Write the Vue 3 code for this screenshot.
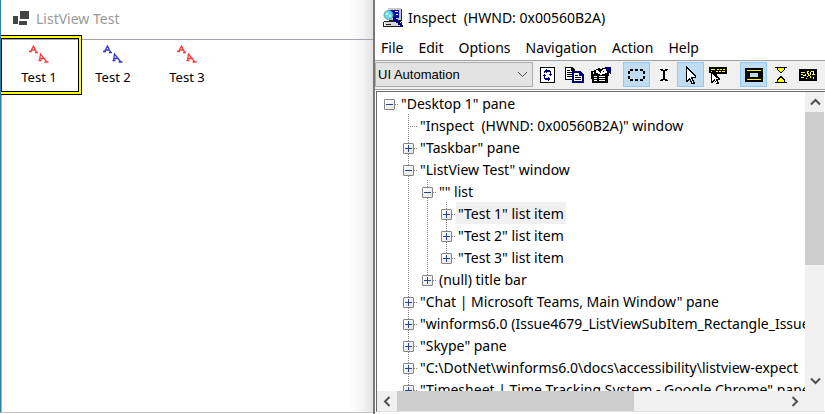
<script setup>
const list = [
  { label: 'Test 1', color: '#ff3b3b', selected: true },
  { label: 'Test 2', color: '#3a3acb', selected: false },
  { label: 'Test 3', color: '#ff3b3b', selected: false },
]
const menus = ['File', 'Edit', 'Options', 'Navigation', 'Action', 'Help']

// Each icon is a list of filled paths on a 20x18 pixel grid.
const groups = [
  [
    { name: 'Refresh', paths: [
      ['#000', 'M3 1h15v16H3z'], ['#fff', 'M4 2h13v14H4z'],
      ['#000080', 'M7 5h1V4h1V3h1v1h3v1h1v3h1v1h-1v1h-1V9h-1V8h1V6h-3v1H9V6H8v1H7zM7 8h1v1h1v1H8v2h3v-1h1v1h1v2h-1v1h-1v-1H8v-1H7v-3H6V9h1z'],
    ] },
    { name: 'Copy', paths: [
      ['#000', 'M1 1h7l3 3v10H1z'], ['#fff', 'M2 2h5v3h3v8H2z'],
      ['#000', 'M3 4h3v1H3zM3 6h5v1H3zM3 8h5v1H3zM3 10h5v1H3z'],
      ['#000080', 'M8 5h8l4 4v8H8z'], ['#fff', 'M10 7h5v3h3v5h-8z'],
      ['#000', 'M11 9h3v1h-3zM11 11h6v1h-6zM11 13h6v1h-6z'],
    ] },
    { name: 'Properties', paths: [
      ['#000', 'M0 5h3V4h2V3h2V2h2v1h2V2h3V1h5v6h-1v3h-1v7H1v-4H0z'], ['#000080', 'M15 1h5v7h-1V6h-1V5h-1V4h-2z'],
      ['#fff', 'M5 4h2v1h1v1h2V5h1V4h1V3h3v2h1v2h-2v1h-3v1H9V8H7V7H5zM2 6h1v2H2zM3 10h3v1H3zM8 10h6v1H8zM3 12h3v1H3zM8 12h6v1H8zM3 14h3v1H3zM8 14h6v1H8z'],
      ['#000', 'M9 6h1v1H9zM12 5h1v1h-1z'],
    ] },
  ],
  [
    { name: 'Show highlight rectangle', on: true, paths: [
      ['#000', 'M3 3h3v2H3zM8 3h3v2H8zM13 3h3v2h-3zM3 13h3v2H3zM8 13h3v2H8zM13 13h3v2h-3zM1 5h2v3H1zM1 10h2v3H1zM16 5h2v3h-2zM16 10h2v3h-2z'],
    ] },
    { name: 'Show caret rectangle', paths: [
      ['#000', 'M6 3h3v1h2V3h3v1h-1v1h-2v8h2v1h1v1h-3v-1H9v1H6v-1h1v-1h2V5H7V4H6z'],
    ] },
    { name: 'Watch cursor', on: true, paths: [
      ['#000', 'M5 0h1v1h1v1h1v1h1v1h1v1h1v1h1v1h1v1h1v1h1v3h-3v2h1v2h1v2h-1v1h-2v-1h-1v-2H9v-2H8v1H7v1H5z'],
      ['#fff', 'M6 3h1v1h1v1h1v1h1v1h1v1h1v1h1v1h1v1h-4v2h1v2h1v2h-1v-2h-1v-2H9v-1H8v1H7v1H6z'],
    ] },
    { name: 'Show tooltip', paths: [
      ['#000', 'M1 1h18v7H9v2h1v1h1v1h1v2h-2v2h1v2H8v-2H7v-1H6v1H5v1H3V7H1z'],
      ['#ff0', 'M3 3h4v1H3zM9 3h2v1H9zM12 3h2v1h-2zM15 3h2v1h-2zM3 5h1v1H3zM8 5h2v1H8zM11 5h2v1h-2zM14 5h3v1h-3z'],
      ['#fff', 'M4 8h1v1h1v1h1v1h1v1h2v1H8v2h1v2H8v-2H7v-2H6v1H5v1H4z'],
    ] },
  ],
  [
    { name: 'Show information', on: true, paths: [
      ['#000', 'M1 2h18v14H1z'], ['#ff0', 'M3 4h14v1H3zM3 13h14v1H3z'], ['#c0dcf3', 'M6 7h8v4H6z'],
    ] },
    { name: 'Collapse', paths: [
      ['#000', 'M4 1h12v1h-2v2h-1v1h-1v1h-1v1H9V6H8V5H7V4H6V2H4zM4 16h12v1H4zM9 10h2v1h1v1h1v1h1v3H6v-3h1v-1h1v-1h1z'],
      ['#ff0', 'M7 2h6v2h-1v1h-1v1H9V5H8V4H7zM9 12h2v1h1v1h1v2H7v-2h1v-1h1z'],
    ] },
    { name: 'Action overlay', paths: [
      ['#000', 'M1 3h18v12H1z'],
      ['#ff0', 'M3 6h4v1H3zM9 5h2v1H9zM13 5h3v1h-3zM3 8h2v1H3zM7 8h1v2H7zM10 7h1v3h-1zM14 8h3v1h-3zM3 11h3v1H3zM8 12h1v1H8zM12 10h1v2h-1zM15 11h1v2h-1z'],
      ['#fff', 'M9 6h1v2H9zM12 6h1v3h-1zM5 9h2v1H5zM9 10h1v1H9zM15 6h1v2h-1zM11 9h1v1h-1z'],
    ] },
  ],
]

// guides: ancestor levels whose vertical line passes through the row
const rows = [
  { level: 0, sign: '-', text: '"Desktop 1" pane', guides: [], root: true },
  { level: 1, sign: '', text: '"Inspect  (HWND: 0x00560B2A)" window', guides: [] },
  { level: 1, sign: '+', text: '"Taskbar" pane', guides: [] },
  { level: 1, sign: '-', text: '"ListView Test" window', guides: [] },
  { level: 2, sign: '-', text: '"" list', guides: [1] },
  { level: 3, sign: '+', text: '"Test 1" list item', guides: [1, 2], selected: true },
  { level: 3, sign: '+', text: '"Test 2" list item', guides: [1, 2] },
  { level: 3, sign: '+', text: '"Test 3" list item', guides: [1, 2], last: true },
  { level: 2, sign: '+', text: '(null) title bar', guides: [1], last: true },
  { level: 1, sign: '+', text: '"Chat | Microsoft Teams, Main Window" pane', guides: [] },
  { level: 1, sign: '+', text: '"winforms6.0 (Issue4679_ListViewSubItem_Rectangle_Issue', guides: [] },
  { level: 1, sign: '+', text: '"Skype" pane', guides: [] },
  { level: 1, sign: '+', text: '"C:\\DotNet\\winforms6.0\\docs\\accessibility\\listview-expect', guides: [] },
  { level: 1, sign: '+', text: '"Timesheet | Time Tracking System - Google Chrome" pane', guides: [] },
]

function columns(row) {
  return Array.from({ length: row.level }, (_, i) => row.guides.includes(i))
}
</script>

<template>
  <div class="screen">
    <section class="form">
      <header class="form-title">
        <svg width="16" height="14" viewBox="0 0 16 14"><path d="M7 0h9v8H7zM0 5h5v8H0zM6 10h8v4H6z" fill="#444" /></svg>
        <span>ListView Test</span>
      </header>
      <ul class="list">
        <li v-for="item in list" :key="item.label" :class="{ selected: item.selected }">
          <svg width="20" height="18" viewBox="0 0 20 18" fill="none" :stroke="item.color" stroke-width="1.3">
            <path d="M0 6.500h3M1.500 6.500L4.500 1l3 6M2.500 5h4M6 7.500h3M9.500 15.500h3M10.500 15.500L11.500 9l6 7.500M11 13.500h4M15.500 17h4" />
          </svg>
          <span>{{ item.label }}</span>
        </li>
      </ul>
    </section>

    <section class="inspect">
      <header class="inspect-title">
        <svg width="21" height="20" viewBox="0 0 21 20" shape-rendering="crispEdges">
          <path d="M5 0h13v12H5z" fill="#c8c8c8" />
          <path d="M18 1h1v12H6v-1h12z" fill="#222" />
          <path d="M7 2h9v8H7z" fill="#0010a8" />
          <path d="M12 3h3v1h-3zM13 6h2v1h-2z" fill="#fff" />
          <path d="M2 14h16v4H2z" fill="#d8d8d8" />
          <path d="M1 13h17v1H1zM0 14h1v5H0zM1 18h18v1H1zM18 14h1v4h-1zM3 16h5v1H3z" fill="#222" />
          <path d="M10 10h3v1h2v2h2v2h2v2h1v2h-3v-2h-2v-2h-2v-2h-2v-1h-1z" fill="#000090" />
          <circle cx="5.500" cy="7" r="4.500" fill="#5fe0ea" stroke="#6b9da5" shape-rendering="auto" />
          <path d="M3 5h2v2H3zM6 7h2v2H6z" fill="#d8ffff" />
        </svg>
        <span>Inspect&nbsp; (HWND: 0x00560B2A)</span>
      </header>
      <nav class="menu">
        <button v-for="m in menus" :key="m" type="button">{{ m }}</button>
      </nav>
      <div class="toolbar">
        <div class="combo">
          <select aria-label="Mode"><option>UI Automation</option></select>
          <svg width="11" height="7" viewBox="0 0 11 7"><path d="M1 1l4.500 4.500L10 1" fill="none" stroke="#555" /></svg>
        </div>
        <div v-for="(group, g) in groups" :key="g" class="group">
          <button v-for="icon in group" :key="icon.name" type="button" :aria-label="icon.name" :aria-pressed="!!icon.on" :class="{ on: icon.on }">
            <svg width="20" height="18" viewBox="0 0 20 18" shape-rendering="crispEdges">
              <path v-for="([fill, d], i) in icon.paths" :key="i" :fill="fill" :d="d" />
            </svg>
          </button>
        </div>
      </div>
      <div class="tree-frame">
        <ul class="tree">
          <li v-for="row in rows" :key="row.text" class="row">
            <i v-for="(on, i) in columns(row)" :key="i" class="guide" :class="{ on }"></i>
            <span class="node" :class="{ last: row.last, root: row.root }">
              <button v-if="row.sign" type="button" class="box" :aria-label="row.sign === '+' ? 'Expand' : 'Collapse'">
                <svg width="9" height="9" viewBox="0 0 9 9" shape-rendering="crispEdges">
                  <path :d="row.sign === '+' ? 'M1 4h7v1H1zM4 1h1v7H4z' : 'M1 4h7v1H1z'" fill="#2a4595" />
                </svg>
              </button>
            </span>
            <span class="label" :class="{ selected: row.selected }">{{ row.text }}</span>
          </li>
        </ul>
        <div class="bar vertical">
          <button type="button" aria-label="Scroll up"><svg width="11" height="8" viewBox="0 0 11 8"><path d="M1 6.500l4.500-4.500L10 6.500" /></svg></button>
          <div class="track"><div class="thumb"></div></div>
          <button type="button" aria-label="Scroll down"><svg width="11" height="8" viewBox="0 0 11 8"><path d="M1 1.500L5.500 6 10 1.500" /></svg></button>
        </div>
        <div class="bar horizontal">
          <button type="button" aria-label="Scroll left"><svg width="8" height="11" viewBox="0 0 8 11"><path d="M6.500 1L2 5.500 6.500 10" /></svg></button>
          <div class="track"><div class="thumb"></div></div>
          <button type="button" aria-label="Scroll right"><svg width="8" height="11" viewBox="0 0 8 11"><path d="M1.500 1L6 5.500 1.500 10" /></svg></button>
        </div>
        <div class="corner"></div>
      </div>
    </section>
  </div>
</template>

<style>
body { margin: 0; background: #fff; }
</style>
<style scoped>
.screen {
  display: grid;
  grid-template-columns: 373fr 452fr;
  height: 100vh;
  overflow: hidden;
  font: 14px/22px "Noto Sans", "Open Sans", sans-serif;
  color: #000;
}
ul { list-style: none; margin: 0; padding: 0; }
button { font: inherit; color: inherit; border: 0; margin: 0; padding: 0; background: none; }
svg { display: block; flex: none; }

.form {
  display: flex;
  flex-direction: column;
  min-width: 0;
  overflow: hidden;
  box-sizing: border-box;
  border-left: 1px solid #2f7fa8;
  border-bottom: 1px solid #c4c4c4;
  margin-bottom: 1px;
  background: linear-gradient(to left, #e2e2e2, #f4f4f4 10px, #fff 24px);
}
.form-title { display: flex; align-items: center; gap: 7px; height: 39px; padding: 0 12px; box-sizing: border-box; color: #999; }
.form-title span { margin-bottom: 2px; }
.form-title svg { margin-bottom: 4px; }
.list { display: flex; flex: 1; border-top: 1px solid #a0a4ae; border-left: 1px solid #b0b4bc; }
.list li {
  position: relative;
  display: flex;
  flex-direction: column;
  align-items: center;
  width: 74px;
  height: 52px;
  padding-top: 5px;
  font-size: 13px;
  line-height: 28px;
}
.list li.selected::after {
  content: "";
  position: absolute;
  inset: -4px -5px auto -3px;
  height: 54px;
  border: 2px solid #ff0;
  outline: 1px solid #000;
  box-shadow: inset 0 0 0 1px #000;
}

.inspect {
  display: flex;
  flex-direction: column;
  min-width: 0;
  min-height: 0;
  border-left: 2px solid #777;
  background: #fff;
}
.inspect-title { display: flex; align-items: center; gap: 4px; height: 36px; padding: 0 8px; }
.menu { display: flex; gap: 15px; height: 24px; padding: 0 6px; align-items: center; }
.toolbar { display: flex; gap: 9px; height: 27px; padding-top: 1px; border-top: 1px solid #a0a0a0; border-bottom: 1px solid #a0a0a0; background: #f0f0f0; align-items: flex-start; }
.combo { display: grid; align-items: center; width: 158px; margin-right: -9px; }
.combo > * { grid-area: 1 / 1; }
.combo svg { justify-self: end; margin-right: 5px; pointer-events: none; }
.combo select {
  appearance: none;
  width: 100%;
  height: 25px;
  padding: 0 2px;
  border: 1px solid #adadad;
  border-radius: 0;
  background: #e3e3e3;
  color: #000;
  font: 13px "Liberation Sans", sans-serif;
}
.group { display: flex; }
.group button { display: flex; align-items: center; justify-content: center; width: 27px; height: 25px; box-sizing: border-box; border: 1px solid transparent; }
.group button.on { background: #c0dcf3; border-color: #90c8f6; }

.tree-frame {
  flex: 1;
  display: grid;
  grid-template: minmax(0, 1fr) 20px / minmax(0, 1fr) 19px;
  min-height: 0;
  margin: 1px 0 2px 1px;
  padding-right: 1px;
  border-top: 1px solid #696969;
  border-left: 1px solid #696969;
  border-bottom: 1px solid #e0e0e0;
}
.tree { overflow: hidden; padding-left: 3px; }
.row { display: flex; height: 22px; white-space: pre; }
.guide, .node { position: relative; flex: none; width: 19px; height: 22px; }
.guide.on::before, .node::before {
  content: "";
  position: absolute;
  left: 9px;
  top: 0;
  bottom: 0;
  width: 1px;
  background: repeating-linear-gradient(#808080 0 1px, transparent 1px 2px);
}
.node.last::before { bottom: 10px; }
.node.root::before { display: none; }
.node::after {
  content: "";
  position: absolute;
  left: 9px;
  right: 1px;
  top: 12px;
  height: 1px;
  background: repeating-linear-gradient(to right, #808080 0 1px, transparent 1px 2px);
}
.box {
  position: absolute;
  z-index: 1;
  left: 4px;
  top: 7px;
  width: 11px;
  height: 11px;
  border: 1px solid #848484;
  border-radius: 1px;
  background: linear-gradient(135deg, #fff, #e4e4e4);
}
.label { padding: 0 2px; line-height: 24px; }
.label.selected { background: #f0f0f0; line-height: 24px; height: 22px; }

.bar { display: flex; background: #f0f0f0; }
.bar button { display: flex; align-items: center; justify-content: center; flex: none; width: 20px; height: 20px; }
.bar path { fill: none; stroke: #505050; stroke-width: 2; }
.track { flex: 1; display: flex; }
.thumb { background: #cdcdcd; }
.vertical { flex-direction: column; }
.vertical .track { flex-direction: column; }
.vertical .thumb { height: 59%; }
.horizontal .thumb { width: 61%; }
.corner { background: #f0f0f0; }
</style>
